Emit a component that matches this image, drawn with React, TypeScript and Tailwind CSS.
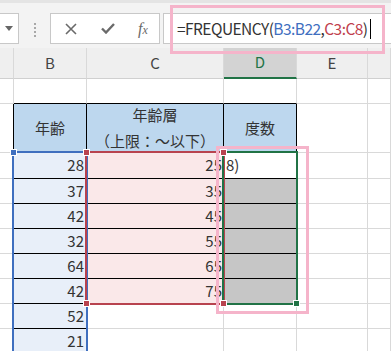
import React from "react";

const font = { fontFamily: '"Noto Sans CJK JP", "Noto Sans", sans-serif' };

const W = [14, 73, 137, 73, 71, 23];

function Row({ h, children }: { h: number; children: React.ReactNode }) {
  return (
    <div className="flex shrink-0" style={{ height: h }}>
      {children}
    </div>
  );
}

function C({
  i,
  cls = "",
  children,
}: {
  i: number;
  cls?: string;
  children?: React.ReactNode;
}) {
  return (
    <div
      className={`shrink-0 box-border border-r border-b overflow-hidden ${cls}`}
      style={{ width: W[i] }}
    >
      {children}
    </div>
  );
}

const g = "border-[#d9d9d9]";

export default function App() {
  const ages = ["28", "37", "42", "32", "64", "42", "52", "21"];
  const bins = ["25", "35", "45", "55", "65", "75"];
  return (
    <div
      className="relative w-[391px] h-[351px] overflow-hidden bg-white text-[#333]"
      style={font}
    >
      {/* toolbar */}
      <div className="relative h-[48px] bg-[#f3f3f3] border-t-[3px] border-[#e4e4e4]">
        <div className="absolute left-[-2px] top-[10px] w-[21px] h-[31px] bg-white border border-[#c8c8c8] flex items-center justify-center">
          <svg width="8" height="5" viewBox="0 0 8 5">
            <path d="M0 0 L8 0 L4 5 Z" fill="#666" />
          </svg>
        </div>
        <div className="absolute left-[34px] top-[20px] flex flex-col gap-[2px]">
          <div className="w-[2px] h-[2px] bg-[#a8a8a8]" />
          <div className="w-[2px] h-[2px] bg-[#a8a8a8]" />
          <div className="w-[2px] h-[2px] bg-[#a8a8a8]" />
          <div className="w-[2px] h-[2px] bg-[#a8a8a8]" />
        </div>
        <div className="absolute left-[50px] top-[10px] w-[110px] h-[31px] bg-white border border-[#c8c8c8] flex items-center">
          <svg className="ml-[14px]" width="12" height="12" viewBox="0 0 12 12">
            <path d="M1 1 L11 11 M11 1 L1 11" stroke="#6a6a6a" strokeWidth="1.6" />
          </svg>
          <svg className="ml-[24px]" width="14" height="11" viewBox="0 0 14 11">
            <path d="M1 5.5 L5 9.5 L13 1" stroke="#6a6a6a" strokeWidth="2.4" fill="none" />
          </svg>
          <span
            className="ml-[23px] text-[16px] italic text-[#6a6a6a] leading-none"
            style={{ fontFamily: '"Liberation Serif", serif' }}
          >
            f<span className="text-[12px]">x</span>
          </span>
        </div>
        <div className="absolute left-[163px] top-[10px] w-[240px] h-[31px] bg-white border border-[#c8c8c8] flex items-center pl-[13px] text-[15.5px] leading-none tracking-[-0.55px]">
          <span>=FREQUENCY(</span>
          <span className="text-[#3f6fbf]">B3:B22</span>
          <span>,</span>
          <span className="text-[#c0404c]">C3:C8</span>
          <span>)</span>
          <span className="w-[1px] h-[20px] bg-black ml-[2px]" />
        </div>
      </div>

      {/* column header row */}
      <Row h={31}>
        <C i={0} cls={`bg-[#efefef] ${g} border-b-[#d0d0d0]`} />
        <C i={1} cls={`bg-[#efefef] ${g} border-b-[#d0d0d0] flex items-center justify-center text-[15px] text-[#444]`}>B</C>
        <C i={2} cls={`bg-[#efefef] ${g} border-b-[#d0d0d0] flex items-center justify-center text-[15px] text-[#444]`}>C</C>
        <C i={3} cls={`bg-[#d3d3d3] ${g} border-b-2 border-b-[#217346] flex items-center justify-center text-[15px] text-[#217346]`}>D</C>
        <C i={4} cls={`bg-[#efefef] ${g} border-b-[#d0d0d0] flex items-center justify-center text-[15px] text-[#444]`}>E</C>
        <C i={5} cls={`bg-[#efefef] ${g} border-b-[#d0d0d0]`} />
      </Row>

      {/* row 1 */}
      <Row h={25}>
        <C i={0} cls={g} />
        <C i={1} cls={`${g} border-b-black`} />
        <C i={2} cls={`${g} border-b-black`} />
        <C i={3} cls={`${g} border-b-black`} />
        <C i={4} cls={g} />
        <C i={5} cls={g} />
      </Row>

      {/* table header */}
      <Row h={49}>
        <C i={0} cls={`${g} border-r-black`} />
        <C i={1} cls="border-black bg-[#bdd7ee] flex items-center justify-center text-[15px]">年齢</C>
        <C i={2} cls="border-black bg-[#bdd7ee] flex flex-col items-center justify-center text-[15px] leading-[26px]">
          <span>年齢層</span>
          <span>（上限：～以下）</span>
        </C>
        <C i={3} cls="border-black bg-[#bdd7ee] flex items-center justify-center text-[15px]">度数</C>
        <C i={4} cls={g} />
        <C i={5} cls={g} />
      </Row>

      {ages.map((a, r) => (
        <Row key={r} h={r === 0 ? 26 : 25}>
          <C i={0} cls={g} />
          <C i={1} cls="border-black bg-[#e8eff9] flex items-center justify-end pr-[2px] text-[15px]">{a}</C>
          {r < 6 ? (
            <C i={2} cls="border-black bg-[#fae8e9] flex items-center justify-end pr-[1px] text-[15px]">{bins[r]}</C>
          ) : (
            <C i={2} cls={g} />
          )}
          {r < 6 ? (
            <C
              i={3}
              cls={`border-black ${r === 0 ? "bg-white" : "bg-[#c6c6c6]"} flex items-center pl-[2px] text-[15px]`}
            >
              {r === 0 ? "8)" : null}
            </C>
          ) : (
            <C i={3} cls={g} />
          )}
          <C i={4} cls={g} />
          <C i={5} cls={g} />
        </Row>
      ))}

      {/* reference range borders */}
      <div className="absolute left-[12px] top-[151px] w-[76px] h-[260px] border-2 border-[#3f6fbf]" />
      <div className="absolute left-[85px] top-[151px] w-[140px] h-[154px] border-2 border-[#b8434f]" />
      <div className="absolute left-[222px] top-[151px] w-[76px] h-[154px] border-2 border-[#217346]" />

      {/* handles */}
      <div className="absolute left-[10px] top-[149px] w-[7px] h-[7px] bg-[#3f6fbf] border border-white" />
      <div className="absolute left-[83px] top-[149px] w-[7px] h-[7px] bg-[#b8434f] border border-white" />
      <div className="absolute left-[220px] top-[149px] w-[7px] h-[7px] bg-[#b8434f] border border-white" />
      <div className="absolute left-[83px] top-[300px] w-[7px] h-[7px] bg-[#b8434f] border border-white" />
      <div className="absolute left-[220px] top-[300px] w-[7px] h-[7px] bg-[#b8434f] border border-white" />
      <div className="absolute left-[293px] top-[300px] w-[7px] h-[7px] bg-[#217346] border border-white" />

      {/* pink annotation boxes */}
      <div className="absolute left-[170px] top-[5px] w-[215px] h-[49px] border-[3px] border-[#f5b4ca]" />
      <div className="absolute left-[216px] top-[146px] w-[93px] h-[168px] border-[3px] border-[#f5b4ca]" />
    </div>
  );
}
